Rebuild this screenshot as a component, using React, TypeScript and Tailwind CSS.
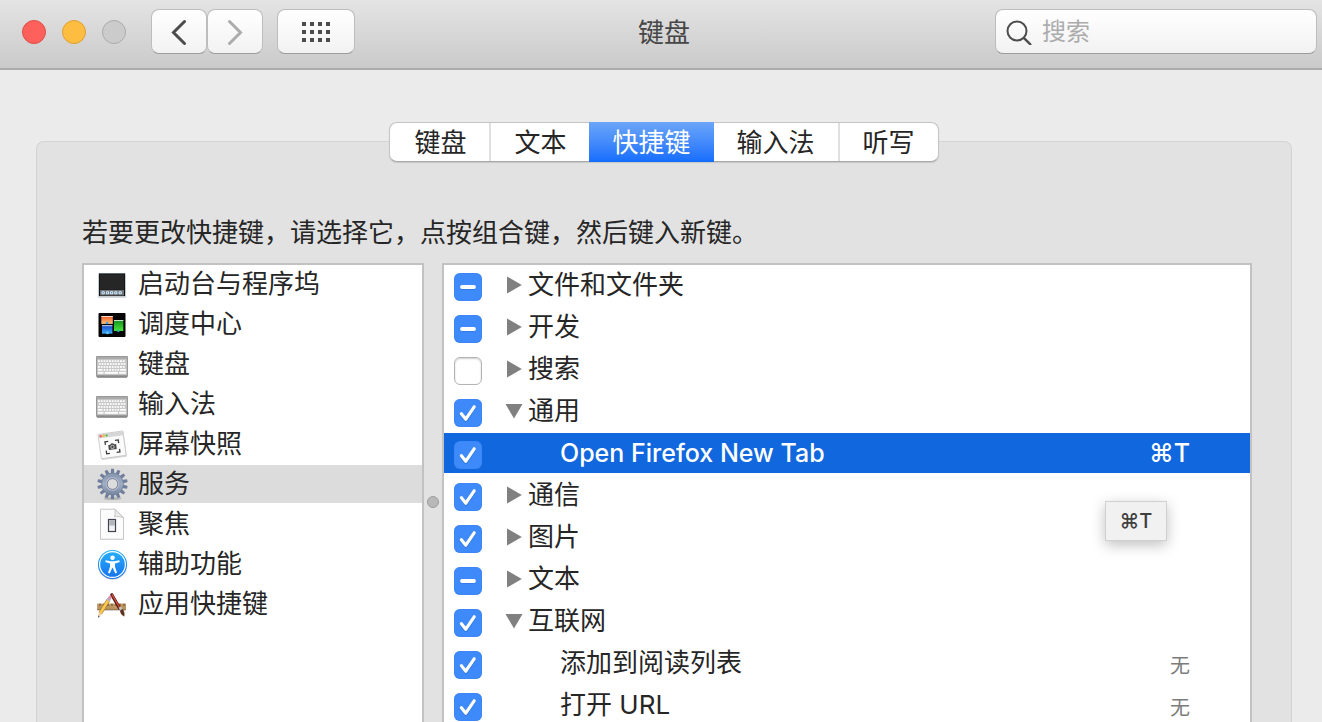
import { useState, type ReactNode } from "react";

type CheckState = "on" | "off" | "mixed";

type ServiceRow = {
  id: string;
  label: string;
  state: CheckState;
  kind: "closed" | "open" | "item";
  shortcut?: string;
};

const tabs = ["键盘", "文本", "快捷键", "输入法", "听写"];

const initialRows: ServiceRow[] = [
  { id: "files", label: "文件和文件夹", state: "mixed", kind: "closed" },
  { id: "dev", label: "开发", state: "mixed", kind: "closed" },
  { id: "search", label: "搜索", state: "off", kind: "closed" },
  { id: "general", label: "通用", state: "on", kind: "open" },
  { id: "firefox", label: "Open Firefox New Tab", state: "on", kind: "item", shortcut: "⌘T" },
  { id: "messaging", label: "通信", state: "on", kind: "closed" },
  { id: "pictures", label: "图片", state: "on", kind: "closed" },
  { id: "text", label: "文本", state: "mixed", kind: "closed" },
  { id: "internet", label: "互联网", state: "on", kind: "open" },
  { id: "reading", label: "添加到阅读列表", state: "on", kind: "item", shortcut: "无" },
  { id: "url", label: "打开 URL", state: "on", kind: "item", shortcut: "无" },
];

function Icon({ children }: { children: ReactNode }) {
  return (
    <svg viewBox="0 0 32 32" className="size-8 shrink-0 overflow-visible" aria-hidden="true">
      {children}
    </svg>
  );
}

function LaunchpadIcon() {
  return (
    <Icon>
      <rect x="2" y="6" width="28" height="24" rx="1" fill="#000" opacity="0.15" />
      <rect x="2.5" y="5" width="27" height="23.5" rx="0.8" fill="#a9bfce" />
      <rect x="3" y="5.5" width="26" height="22.5" fill="#111" />
      <rect x="3.8" y="6.3" width="24.4" height="15.5" fill="#262626" />
      <rect x="4" y="22" width="24" height="5.5" fill="#6f7478" />
      {[5.6, 10, 14, 18.2, 22.6].map((x) => (
        <rect key={x} x={x} y="23.2" width="3.2" height="3" rx="1" fill="#dcecf8" />
      ))}
      {[6.6, 11, 15, 19.2, 23.6].map((x) => (
        <rect key={x} x={x} y="24.2" width="1.2" height="1.2" fill="#3c7fb4" />
      ))}
    </Icon>
  );
}

function MissionIcon() {
  return (
    <Icon>
      <defs>
        <linearGradient id="mc-o" x1="0" y1="0" x2="0" y2="1">
          <stop offset="0" stopColor="#ee5a24" />
          <stop offset="1" stopColor="#ffc47a" />
        </linearGradient>
        <linearGradient id="mc-b" x1="0" y1="0" x2="0" y2="1">
          <stop offset="0" stopColor="#1742c4" />
          <stop offset="1" stopColor="#3fb0fa" />
        </linearGradient>
        <linearGradient id="mc-g" x1="0" y1="0" x2="0" y2="1">
          <stop offset="0" stopColor="#129022" />
          <stop offset="1" stopColor="#48e636" />
        </linearGradient>
      </defs>
      <rect x="2.5" y="5" width="27" height="24" rx="1" fill="#050505" />
      <rect x="5.3" y="8" width="11.5" height="7.9" fill="url(#mc-o)" />
      <rect x="5.3" y="8" width="11.5" height="1" fill="#f3d8cc" />
      <rect x="6" y="17.2" width="10.4" height="8.4" fill="url(#mc-b)" />
      <rect x="6" y="17.2" width="10.4" height="1" fill="#c9d8ee" />
      <rect x="18" y="12" width="9.3" height="11" fill="url(#mc-g)" />
      <rect x="18" y="12" width="9.3" height="1" fill="#c8e6c8" />
      <circle cx="11.2" cy="15" r="1.3" fill="#3f9ce8" />
      <circle cx="11.5" cy="24.7" r="1.5" fill="#5cc0ff" />
      <circle cx="22.4" cy="22.8" r="1.3" fill="#2bb8b0" />
    </Icon>
  );
}

function KeyboardIcon() {
  const rows = [12.2, 15.1, 18];
  return (
    <Icon>
      <rect x="0.5" y="9" width="31" height="20.8" rx="1.5" fill="#7d7d7d" />
      <rect x="0" y="8" width="32" height="20.5" rx="1" fill="#989898" />
      <rect x="1" y="9" width="30" height="18" rx="0.5" fill="#c4c4c4" />
      <rect x="1" y="9" width="30" height="2" fill="#ababab" />
      {rows.map((y, r) => (
        <g key={y} fill="#fafafa">
          {Array.from({ length: 10 }, (_, i) => (
            <rect key={i} x={2 + (r % 2) * 0.8 + i * 2.75} y={y} width="1.9" height="1.9" />
          ))}
        </g>
      ))}
      <rect x="2" y="20.9" width="4.6" height="1.9" fill="#fafafa" />
      {[7.6, 10.35, 13.1, 15.85, 18.6, 21.35].map((x) => (
        <rect key={x} x={x} y="20.9" width="1.9" height="1.9" fill="#fafafa" />
      ))}
      <rect x="24.1" y="20.9" width="5.8" height="1.9" fill="#fafafa" />
      <rect x="2" y="23.8" width="5.6" height="2" fill="#fafafa" />
      <rect x="8.6" y="23.8" width="13.4" height="2" fill="#fff" />
      <rect x="23" y="23.8" width="6.9" height="2" fill="#fafafa" />
    </Icon>
  );
}

function ScreenshotIcon() {
  return (
    <Icon>
      <g transform="rotate(-8 16 17)">
        <rect x="4.2" y="5.6" width="25" height="25" fill="#000" opacity="0.14" />
        <rect x="3.6" y="4.6" width="25" height="24.6" fill="#fbfbfb" stroke="#bdbdbd" strokeWidth="0.7" />
        <rect x="3.6" y="4.6" width="25" height="4.2" fill="#d6d6d6" />
        <circle cx="6" cy="6.7" r="1.2" fill="#f05a50" />
        <circle cx="9" cy="6.7" r="1.2" fill="#f2b532" />
        <circle cx="12" cy="6.7" r="1.2" fill="#4cc445" />
        <path
          d="M9.5 16v-3.2h3.3M19.6 12.8h3.3V16M22.9 21.8V25h-3.3M12.8 25H9.5v-3.2"
          fill="none"
          stroke="#3b3b3b"
          strokeWidth="1.3"
        />
        <path d="M12.2 16.6h2.1l.8-1.2h2.2l.8 1.2h2.1v5h-8z" fill="#4a4a4a" />
        <circle cx="16.2" cy="19" r="1.7" fill="#4a4a4a" stroke="#e5e5e5" strokeWidth="0.7" />
      </g>
    </Icon>
  );
}

function GearIcon() {
  const teeth = Array.from({ length: 14 }, (_, i) => (i * 360) / 14);
  return (
    <Icon>
      <defs>
        <linearGradient id="gear" x1="0" y1="4" x2="0" y2="28" gradientUnits="userSpaceOnUse">
          <stop offset="0" stopColor="#8493ae" />
          <stop offset="0.5" stopColor="#a0adc4" />
          <stop offset="1" stopColor="#72809c" />
        </linearGradient>
      </defs>
      <ellipse cx="16.5" cy="30.5" rx="9" ry="1.6" fill="#000" opacity="0.18" />
      <g fill="#6f7e9a">
        {teeth.map((a) => (
          <path key={a} d="M14.6 6.5L15.1.8h2.8l.5 5.7z" transform={`rotate(${a} 16.5 16)`} />
        ))}
      </g>
      <circle cx="16.5" cy="16" r="10.9" fill="url(#gear)" stroke="#6f7e9a" strokeWidth="0.7" />
      <circle cx="16.5" cy="16" r="6.1" fill="#dcdcdc" stroke="#b9c4d6" strokeWidth="1.2" />
      <circle cx="16.5" cy="16" r="5.4" fill="#dcdcdc" stroke="#5a667f" strokeWidth="0.8" />
    </Icon>
  );
}

function SpotlightIcon() {
  return (
    <Icon>
      <path d="M4.2 1.5h14.6l9 8.5v21.8H4.2z" fill="#000" opacity="0.12" />
      <path d="M4.5 1.2h14.3l8.7 8.5v21.5h-23z" fill="#fcfcfc" stroke="#bcbcbc" strokeWidth="0.8" />
      <path d="M18.8 1.2c.6 3 .4 5.6-.4 7.6 2.6-.4 6-.2 9.1.9z" fill="#ececec" stroke="#bcbcbc" strokeWidth="0.8" />
      <rect x="12.5" y="11.5" width="7" height="12" fill="#f2f2f4" stroke="#3f4450" strokeWidth="1.2" />
      <rect x="13.1" y="12.1" width="5.8" height="5.4" fill="#b4b6bd" />
    </Icon>
  );
}

function AccessibilityIcon() {
  return (
    <Icon>
      <defs>
        <linearGradient id="acc" x1="0" y1="0" x2="0" y2="1">
          <stop offset="0" stopColor="#28b2fa" />
          <stop offset="1" stopColor="#1470f0" />
        </linearGradient>
      </defs>
      <circle cx="16.5" cy="17.2" r="14.6" fill="#000" opacity="0.2" />
      <circle cx="16.5" cy="16.5" r="14.5" fill="url(#acc)" />
      <circle cx="16.5" cy="16.5" r="12.9" fill="none" stroke="#fff" strokeWidth="1.2" />
      <circle cx="16.5" cy="9.8" r="2.3" fill="#fff" />
      <path
        d="M9.7 12.2l5 1.1h3.6l5-1.1.4 1.7-4.7 1.5v3.4l2 6-1.7.6-2.6-5.6h-.4l-2.6 5.6-1.7-.6 2-6v-3.4l-4.7-1.5z"
        fill="#fff"
      />
    </Icon>
  );
}

function AppShortcutsIcon() {
  return (
    <Icon>
      <rect x="1.2" y="16.6" width="28.8" height="6.4" fill="#000" opacity="0.18" />
      <rect x="1.2" y="15.6" width="28.8" height="6.2" fill="#bd9560" />
      <path d="M1.2 21.4h28.8" stroke="#94703f" strokeWidth="0.8" />
      <path
        d="M4 15.6v2.4M8 15.6v2.4M12 15.6v2.4M16 15.6v2.4M20 15.6v2.4M24 15.6v2.4M28 15.6v2.4"
        stroke="#5d4526"
        strokeWidth="0.9"
      />
      <path d="M15.8 6.8L23.6 20.3" stroke="#4a1712" strokeWidth="3.2" strokeLinecap="round" />
      <path d="M16.2 6.8L23.8 20" stroke="#d0503e" strokeWidth="1.5" strokeLinecap="round" />
      <path d="M22.6 19.8l2.4-1.3 1.7 2.7-2.6 1.4z" fill="#c4c4c4" />
      <path d="M24 22.5l2.7-1.4c1.8 2.1 2 4.6 1.7 7.5-2.6-1.3-4.3-3.2-4.4-6.1z" fill="#5e3420" />
      <path d="M12.4 12L4.3 25.3" stroke="#98701f" strokeWidth="3.8" />
      <path d="M12.4 12L4.3 25.3" stroke="#fbc850" strokeWidth="2.8" />
      <path d="M14 9.5L13.4 10.5" stroke="#e58ba4" strokeWidth="3.4" strokeLinecap="round" />
      <path d="M13 11l-.9 1.5" stroke="#aab4cc" strokeWidth="3.8" />
      <path d="M2.7 24.3l3.2 2-3.8 3.3z" fill="#ecd0a0" />
      <path d="M2.4 27.6l1.3.8-1.6 1.3z" fill="#333" />
    </Icon>
  );
}

const categories = [
  { label: "启动台与程序坞", icon: <LaunchpadIcon /> },
  { label: "调度中心", icon: <MissionIcon /> },
  { label: "键盘", icon: <KeyboardIcon /> },
  { label: "输入法", icon: <KeyboardIcon /> },
  { label: "屏幕快照", icon: <ScreenshotIcon /> },
  { label: "服务", icon: <GearIcon /> },
  { label: "聚焦", icon: <SpotlightIcon /> },
  { label: "辅助功能", icon: <AccessibilityIcon /> },
  { label: "应用快捷键", icon: <AppShortcutsIcon /> },
];

function Checkbox({ id, state, onToggle }: { id: string; state: CheckState; onToggle: () => void }) {
  const filled = state !== "off";
  return (
    <span className="grid size-7 shrink-0">
      <input
        id={id}
        type="checkbox"
        checked={state === "on"}
        ref={(el) => {
          if (el) el.indeterminate = state === "mixed";
        }}
        onChange={onToggle}
        className={`col-start-1 row-start-1 size-7 appearance-none rounded-md ${
          filled
            ? "bg-[#3f8afa] shadow-[inset_0_0_1px_#2a72e0]"
            : "border border-[#b4b4b4] bg-white shadow-[inset_0_1px_2px_rgba(0,0,0,0.2)]"
        }`}
      />
      {filled && (
        <svg viewBox="0 0 28 28" className="pointer-events-none col-start-1 row-start-1 size-7" aria-hidden="true">
          <g fill="none" strokeLinecap="round" strokeLinejoin="round">
            <path
              d={state === "on" ? "M7.4 15.8l4.4 5.4L20.2 8.8" : "M8 15h12"}
              stroke="#1b5fc4"
              strokeOpacity="0.45"
              strokeWidth="3.4"
            />
            <path
              d={state === "on" ? "M7.4 14.8l4.4 5.4L20.2 7.8" : "M8 14h12"}
              stroke="#fff"
              strokeWidth={state === "on" ? "3.2" : "3.8"}
            />
          </g>
        </svg>
      )}
    </span>
  );
}

const toolButton =
  "flex h-[45px] items-center justify-center rounded-lg border border-[#bdbdbd] border-b-[#9c9c9c] bg-linear-to-b from-white to-[#f2f2f2]";

export default function App() {
  const [tab, setTab] = useState("快捷键");
  const [category, setCategory] = useState("服务");
  const [rows, setRows] = useState(initialRows);
  const [selected, setSelected] = useState("firefox");

  const toggle = (id: string) =>
    setRows((all) => all.map((r) => (r.id === id ? { ...r, state: r.state === "on" ? "off" : "on" } : r)));
  const flip = (id: string) =>
    setRows((all) => all.map((r) => (r.id === id ? { ...r, kind: r.kind === "open" ? "closed" : "open" } : r)));

  return (
    <div className="flex h-screen flex-col overflow-hidden bg-[#ebebeb] font-[Inter,'Noto_Sans_CJK_SC',sans-serif] text-[26px] text-[#262626]">
      <header className="flex h-[70px] shrink-0 items-center border-b-2 border-[#ababab] bg-linear-to-b from-[#e4e4e4] to-[#cacaca] pr-[5px] pb-[5px] pl-[11px]">
        <div className="flex flex-1 items-center">
          <div className="ml-[11px] flex gap-4">
            <button aria-label="关闭" className="size-6 rounded-full border border-[#e04c46] bg-[#fe605b]" />
            <button aria-label="最小化" className="size-6 rounded-full border border-[#dfa033] bg-[#fdbd41]" />
            <button aria-label="缩放" className="size-6 rounded-full border border-[#acacac] bg-[#cbcbcb]" />
          </div>
          <div className="ml-[25px] flex">
            <button aria-label="后退" className={`${toolButton} w-14`}>
              <svg viewBox="0 0 16 26" className="h-[26px] w-4" fill="none" stroke="#4c4c4c" strokeWidth="3" aria-hidden="true">
                <path d="M13.5 2.5L2.500 13.5l11 11" strokeLinecap="round" />
              </svg>
            </button>
            <button aria-label="前进" className={`${toolButton} w-14`}>
              <svg viewBox="0 0 16 26" className="h-[26px] w-4" fill="none" stroke="#acacac" strokeWidth="3" aria-hidden="true">
                <path d="M2.5 2.5l11 11-11 11" strokeLinecap="round" />
              </svg>
            </button>
          </div>
          <button aria-label="显示全部" className={`${toolButton} ml-[14px] w-[78px]`}>
            <svg viewBox="0 0 28 20" className="h-5 w-7" fill="#4c4c4c" aria-hidden="true">
              {[0, 8, 16].map((y) => [0, 8, 16, 24].map((x) => <rect key={`${x}-${y}`} x={x} y={y} width="4" height="4" />))}
            </svg>
          </button>
        </div>
        <h1 className="pt-0.5 leading-10 text-[#464646]">键盘</h1>
        <div className="flex flex-1 justify-end">
          <label className="flex h-[45px] w-[322px] items-center gap-[10px] rounded-lg border border-[#bdbdbd] border-b-[#9c9c9c] bg-linear-to-b from-white to-[#f2f2f2] pl-[10px]">
            <svg viewBox="0 0 26 26" className="size-[26px] shrink-0" fill="none" stroke="#4c4c4c" strokeWidth="2" aria-hidden="true">
              <circle cx="11" cy="12" r="9.5" />
              <path d="M17.8 18.8L25 26" strokeWidth="2.4" />
            </svg>
            <input
              type="text"
              aria-label="搜索"
              placeholder="搜索"
              className="h-10 w-full min-w-0 bg-transparent text-2xl outline-none placeholder:text-[#acacac]"
            />
          </label>
        </div>
      </header>

      <main className="flex min-h-0 flex-1 flex-col pt-[71px] pr-[30px] pl-9">
        <section className="flex flex-1 flex-col rounded-t-lg border border-b-0 border-[#d4d4d4] bg-[#e2e2e2]">
          <div
            role="tablist"
            className="-mt-5 flex h-10 shrink-0 self-center rounded-lg border border-[#c4c4c4] border-b-[#a8a8a8] bg-white shadow-[0_1px_1px_rgba(0,0,0,0.12)]"
          >
            {tabs.map((t, i) => (
              <button
                key={t}
                role="tab"
                aria-selected={tab === t}
                onClick={() => setTab(t)}
                className={`flex items-center px-[23px] first:pl-6 ${
                  tab === t ? "-my-px bg-linear-to-b from-[#6ba5f8] to-[#146dfd] text-white" : ""
                } ${i === 0 || i === 3 ? "border-r-2 border-[#e0e0e0]" : ""}`}
              >
                {t}
              </button>
            ))}
          </div>

          <div className="pt-[51px] pr-[39px] pl-[45px]">
            <p className="mb-[10px] leading-10">若要更改快捷键，请选择它，点按组合键，然后键入新键。</p>

            <div className="flex min-h-[478px]">
              <ul className="w-[342px] shrink-0 border-2 border-[#c2c2c2] bg-white">
                {categories.map(({ label, icon }) => (
                  <li key={label} className="mb-0.5">
                    <button
                      onClick={() => setCategory(label)}
                      className={`flex h-[38px] w-full items-center gap-[10px] pl-3 text-left ${
                        category === label ? "bg-[#dcdcdc]" : ""
                      }`}
                    >
                      {icon}
                      <span className="leading-[38px]">{label}</span>
                    </button>
                  </li>
                ))}
              </ul>

              <div role="separator" aria-orientation="vertical" className="flex w-[18px] shrink-0 items-center justify-center">
                <span className="size-3 rounded-full border border-[#9e9e9e] bg-[#b8b8b8]" />
              </div>

              <div className="relative flex-1 border-2 border-[#c2c2c2] bg-white">
                <ul>
                  {rows.map((row) => {
                    const active = row.id === selected;
                    return (
                      <li
                        key={row.id}
                        onClick={() => setSelected(row.id)}
                        className={`mb-0.5 flex h-10 items-center pr-[60px] pl-[10px] ${
                          active ? "bg-[#1167de] text-[25px] font-medium text-white" : ""
                        }`}
                      >
                        <span className="pt-1">
                          <Checkbox id={row.id} state={row.state} onToggle={() => toggle(row.id)} />
                        </span>
                        {row.kind !== "item" && (
                          <button aria-label={row.label} onClick={() => flip(row.id)} className="ml-[23px] w-[18px]">
                            <svg viewBox="0 0 18 18" className="size-[18px]" fill="#808080" aria-hidden="true">
                              <path d={row.kind === "open" ? "M0.5 2h17L9 16.5z" : "M2 0.5v17L16.8 9z"} />
                            </svg>
                          </button>
                        )}
                        <label htmlFor={row.id} className={`flex-1 leading-10 ${row.kind === "item" ? "ml-[78px]" : "ml-[5px]"}`}>
                          {row.label}
                        </label>
                        {row.shortcut && (
                          <span className={active ? "leading-10" : "pt-1.5 text-xl text-[#7c7c7c]"}>{row.shortcut}</span>
                        )}
                      </li>
                    );
                  })}
                </ul>
                <div
                  role="tooltip"
                  className="absolute top-[236px] right-[83px] flex h-10 w-[62px] items-center justify-center border border-[#d0d0d0] bg-[#f1f1f1] text-xl font-medium text-[#404040] shadow-[0_4px_14px_rgba(0,0,0,0.25)]"
                >
                  ⌘T
                </div>
              </div>
            </div>
          </div>
        </section>
      </main>
    </div>
  );
}
